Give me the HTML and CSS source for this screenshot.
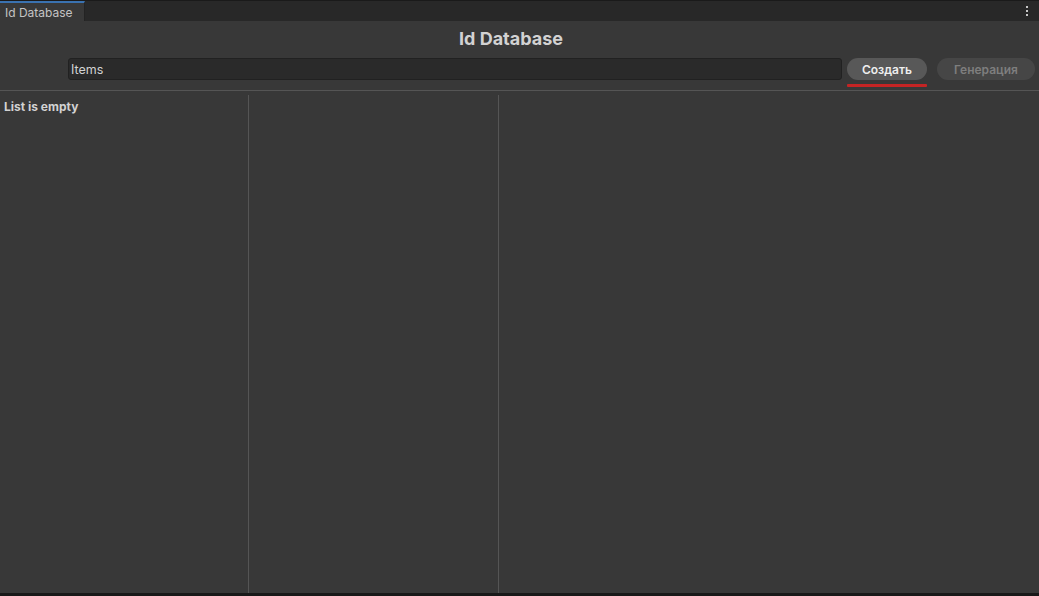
FILE: index.html
```html
<!DOCTYPE html>
<html>
<head>
<meta charset="utf-8">
<link rel="stylesheet" href="styles.css">
</head>
<body>
<div class="window">
  <div class="tabbar">
    <div class="tab">Id Database</div>
    <div class="tabfill"></div>
    <div class="menu"><span></span><span></span><span></span></div>
  </div>
  <div class="content">
    <h1 class="title">Id Database</h1>
    <div class="toolbar">
      <div class="field">Items</div>
      <div class="btnwrap">
        <button class="btn primary">Создать</button>
        <div class="underline"></div>
      </div>
      <button class="btn disabled">Генерация</button>
    </div>
    <div class="sep"></div>
    <div class="panes">
      <div class="pane list"><div class="empty">List is empty</div></div>
      <div class="pane mid"></div>
      <div class="pane detail"></div>
    </div>
  </div>
  <div class="bottom"></div>
</div>
</body>
</html>
```
FILE: styles.css
```css
* { box-sizing: border-box; }
html, body { margin: 0; padding: 0; }
body {
  width: 1039px;
  height: 596px;
  background: #383838;
  font-family: Inter, "Noto Sans", sans-serif;
  color: #d2d2d2;
  overflow: hidden;
}
.window { display: flex; flex-direction: column; height: 596px; }
.tabbar {
  display: flex;
  height: 21px;
  background: #282828;
  border-top: 1px solid #1a1a1a;
  flex: none;
}
.tab {
  width: 85px;
  background: #383838;
  border-top: 2px solid #3a72b0;
  border-right: 1px solid #232323;
  font-size: 12px;
  color: #c4c4c4;
  padding: 2px 0 0 5px;
  line-height: 15px;
}
.tabfill { flex: 1; }
.menu {
  width: 24px;
  display: flex;
  flex-direction: column;
  align-items: center;
  gap: 2px;
  padding-top: 5px;
}
.menu span { width: 2px; height: 2px; background: #c8c8c8; }
.content { flex: 1; display: flex; flex-direction: column; min-height: 0; }
.title {
  margin: 0;
  height: 37px;
  padding: 6px 17px 0 0;
  text-align: center;
  font-size: 18px;
  font-weight: 700;
  line-height: 23px;
  color: #d2d2d2;
}
.toolbar {
  display: flex;
  align-items: flex-start;
  padding-left: 68px;
  height: 32px;
}
.field {
  width: 774px;
  height: 22px;
  background: #2a2a2a;
  border: 1px solid #212121;
  border-radius: 3px;
  font-size: 12.5px;
  line-height: 20px;
  padding: 1px 0 0 2px;
  color: #d2d2d2;
}
.btnwrap { margin-left: 5px; width: 80px; display: flex; flex-direction: column; }
.btn {
  height: 22px;
  border: none;
  border-radius: 11px;
  font-family: Inter, "Noto Sans", sans-serif;
  font-size: 12px;
  font-weight: 600;
  padding: 0;
}
.primary { width: 80px; background: #585858; color: #eeeeee; }
.underline { margin-top: 4px; height: 3px; background: #c42424; border-radius: 1px; }
.disabled { margin-left: 10px; width: 98px; background: #464646; color: #7e7e7e; }
.sep { height: 1px; background: #555555; flex: none; }
.panes { flex: 1; display: flex; padding-top: 4px; min-height: 0; }
.pane { height: 100%; }
.list { width: 249px; border-right: 1px solid #555555; }
.mid { width: 250px; border-right: 1px solid #555555; }
.detail { flex: 1; }
.empty {
  font-size: 12px;
  font-weight: 700;
  color: #d2d2d2;
  padding: 5px 0 0 4px;
  line-height: 14px;
}
.bottom { height: 3px; background: #191919; flex: none; }
```
